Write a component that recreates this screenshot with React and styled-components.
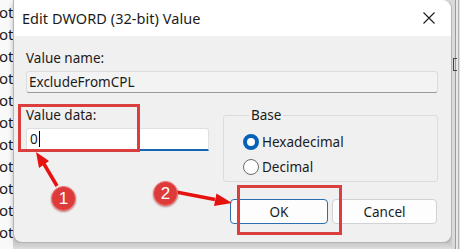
import React from 'react';
import styled, { createGlobalStyle } from 'styled-components';

const GlobalStyle = createGlobalStyle`
  html, body {
    margin: 0;
    padding: 0;
    overflow: hidden;
    background: #e4e4e4;
  }
  body {
    font-family: "Noto Sans", "Open Sans", sans-serif;
  }
`;

const Page = styled.div`
  position: relative;
  width: 460px;
  height: 249px;
  display: flex;
  overflow: hidden;
  background: #d6d6d6;
`;

const LeftStrip = styled.div`
  width: 13px;
  flex: none;
  padding-top: 1px;
  background: #f9f9f9;
  overflow: hidden;
`;

const StripLine = styled.div`
  height: 22px;
  line-height: 22px;
  font-size: 15px;
  color: #1a1a1a;
  white-space: nowrap;
  margin-left: -1px;
`;

const DialogColumn = styled.div`
  width: 439px;
  flex: none;
  display: flex;
  flex-direction: column;
  background: #dcdcdc;
`;

const Dialog = styled.div`
  height: 243px;
  box-sizing: border-box;
  border: 1px solid #b4b4b4;
  border-top: none;
  border-radius: 0 9px 9px 9px;
  overflow: hidden;
  display: flex;
  flex-direction: column;
  background: #f0f0f0;
  box-shadow: 0 2px 5px rgba(0, 0, 0, 0.25);
`;

const TitleBar = styled.div`
  height: 36px;
  flex: none;
  display: flex;
  align-items: center;
  justify-content: space-between;
  padding-left: 8px;
  background: #ffffff;
`;

const Title = styled.span`
  font-size: 14.5px;
  color: #1b1b1b;
  letter-spacing: 0.05px;
`;

const CloseButton = styled.div`
  width: 44px;
  height: 36px;
  display: flex;
  align-items: center;
  justify-content: center;
`;

const Body = styled.div`
  flex: 1;
  padding: 12px 13px 0 12px;
  display: flex;
  flex-direction: column;
`;

const Label = styled.div`
  font-size: 13.5px;
  line-height: 20px;
  color: #1b1b1b;
`;

const NameInput = styled.div`
  margin-top: 3px;
  height: 22px;
  box-sizing: border-box;
  border: 1px solid #dcdcdc;
  border-bottom-color: #9a9a9a;
  border-radius: 3px;
  background: #f3f3f3;
  padding-left: 2px;
  font-size: 13.5px;
  line-height: 20px;
  color: #1b1b1b;
`;

const Row = styled.div`
  margin-top: 12px;
  display: flex;
  gap: 14px;
`;

const DataColumn = styled.div`
  width: 183px;
  display: flex;
  flex-direction: column;
`;

const DataInput = styled.div`
  margin-top: 3px;
  height: 23px;
  box-sizing: border-box;
  border: 1px solid #e0e0e0;
  border-bottom: 2px solid #1565b4;
  border-radius: 3px 3px 0 0;
  background: #ffffff;
  padding-left: 3px;
  font-size: 13.5px;
  line-height: 20px;
  color: #1b1b1b;
  display: flex;
  align-items: center;
`;

const Caret = styled.span`
  display: inline-block;
  width: 1px;
  height: 16px;
  background: #000;
  margin-left: 1px;
`;

const Group = styled.fieldset`
  width: 215px;
  height: 77px;
  box-sizing: border-box;
  margin: 0;
  padding: 4px 0 0 19px;
  border: 1px solid #dcdcdc;
  border-radius: 3px;
`;

const Legend = styled.legend`
  font-size: 13.5px;
  line-height: 20px;
  color: #1b1b1b;
  padding: 0 2px;
  margin-left: 6px;
`;

const RadioRow = styled.div`
  display: flex;
  align-items: center;
  height: 25px;
  gap: 3px;
  font-size: 13.5px;
  color: #1b1b1b;
`;

const RadioMark = styled.span`
  width: 16px;
  height: 16px;
  box-sizing: border-box;
  border-radius: 50%;
  background: #ffffff;
  border: ${p => (p.checked ? '4px solid #0561b7' : '1px solid #6a6a6a')};
`;

const ButtonRow = styled.div`
  margin-top: 17px;
  display: flex;
  justify-content: flex-end;
  gap: 4px;
  padding-right: 1px;
`;

const Button = styled.div`
  width: ${p => p.w}px;
  height: 25px;
  box-sizing: border-box;
  border: 1px solid ${p => (p.primary ? '#2b6fb0' : '#d2d2d2')};
  border-radius: 4px;
  background: #fdfdfd;
  display: flex;
  align-items: center;
  justify-content: center;
  font-size: 13.5px;
  color: #1b1b1b;
`;

const BottomGap = styled.div`
  flex: 1;
  background: linear-gradient(#c8c8c8, #dedede);
`;

const RightStrip = styled.div`
  width: 8px;
  flex: none;
  background: linear-gradient(90deg, #dadada 0 3px, #9c9c9c 3px 4px, #e8e8e8 4px 6px, #b0b0b0 6px 7px, #e0e0e0 7px);
  position: relative;
`;

const Bracket = styled.div`
  position: absolute;
  left: 1px;
  top: 58px;
  width: 3px;
  height: 11px;
  border: 1px solid #444;
  border-right: none;
`;

const Highlight = styled.div`
  position: absolute;
  left: ${p => p.x}px;
  top: ${p => p.y}px;
  width: ${p => p.w}px;
  height: ${p => p.h}px;
  box-sizing: border-box;
  border: 3px solid #da3f3d;
`;

const Overlay = styled.svg`
  position: absolute;
  left: 0;
  top: 0;
`;

const Badge = styled.div`
  position: absolute;
  left: ${p => p.x - 12}px;
  top: ${p => p.y - 12}px;
  width: 25px;
  height: 25px;
  box-sizing: border-box;
  border-radius: 50%;
  background: #dc3b3a;
  border: 1px solid #f07a78;
  box-shadow: 0 1px 2px rgba(120, 0, 0, 0.45);
  color: #ffffff;
  font-family: "Liberation Sans", Arial, sans-serif;
  font-size: 17px;
  display: flex;
  align-items: center;
  justify-content: center;
`;

const lines = Array.from({ length: 11 }, (_, i) => i);

const App = () => {
  return (
    <Page>
      <GlobalStyle />
      <LeftStrip>
        {lines.map(i => (
          <StripLine key={i}>ot</StripLine>
        ))}
      </LeftStrip>
      <DialogColumn>
        <Dialog>
          <TitleBar>
            <Title>Edit DWORD (32-bit) Value</Title>
            <CloseButton>
              <svg width="12" height="12" viewBox="0 0 12 12">
                <path d="M0.5 0.5 L11.5 11.5 M11.5 0.5 L0.5 11.5" stroke="#1b1b1b" strokeWidth="1.1" fill="none" />
              </svg>
            </CloseButton>
          </TitleBar>
          <Body>
            <Label>Value name:</Label>
            <NameInput>ExcludeFromCPL</NameInput>
            <Row>
              <DataColumn>
                <Label>Value data:</Label>
                <DataInput>
                  0<Caret />
                </DataInput>
              </DataColumn>
              <Group>
                <Legend>Base</Legend>
                <RadioRow>
                  <RadioMark checked />
                  Hexadecimal
                </RadioRow>
                <RadioRow>
                  <RadioMark />
                  Decimal
                </RadioRow>
              </Group>
            </Row>
            <ButtonRow>
              <Button w={98} primary>OK</Button>
              <Button w={105}>Cancel</Button>
            </ButtonRow>
          </Body>
        </Dialog>
        <BottomGap />
      </DialogColumn>
      <RightStrip>
        <Bracket />
      </RightStrip>

      <Highlight x={18} y={104} w={122} h={48} />
      <Highlight x={237} y={185} w={105} h={50} />

      <Overlay width="460" height="249" viewBox="0 0 460 249">
        <line x1="57" y1="186" x2="44" y2="164" stroke="#e5120f" strokeWidth="3.5" />
        <polygon points="36,152 49,161 39,168" fill="#e5120f" />
        <line x1="176" y1="192" x2="215" y2="199.5" stroke="#e5120f" strokeWidth="3.5" />
        <polygon points="232,203 216.5,193.5 214,206" fill="#e5120f" />
      </Overlay>

      <Badge x={63} y={198}>1</Badge>
      <Badge x={165} y={193}>2</Badge>
    </Page>
  );
};

export default App;
